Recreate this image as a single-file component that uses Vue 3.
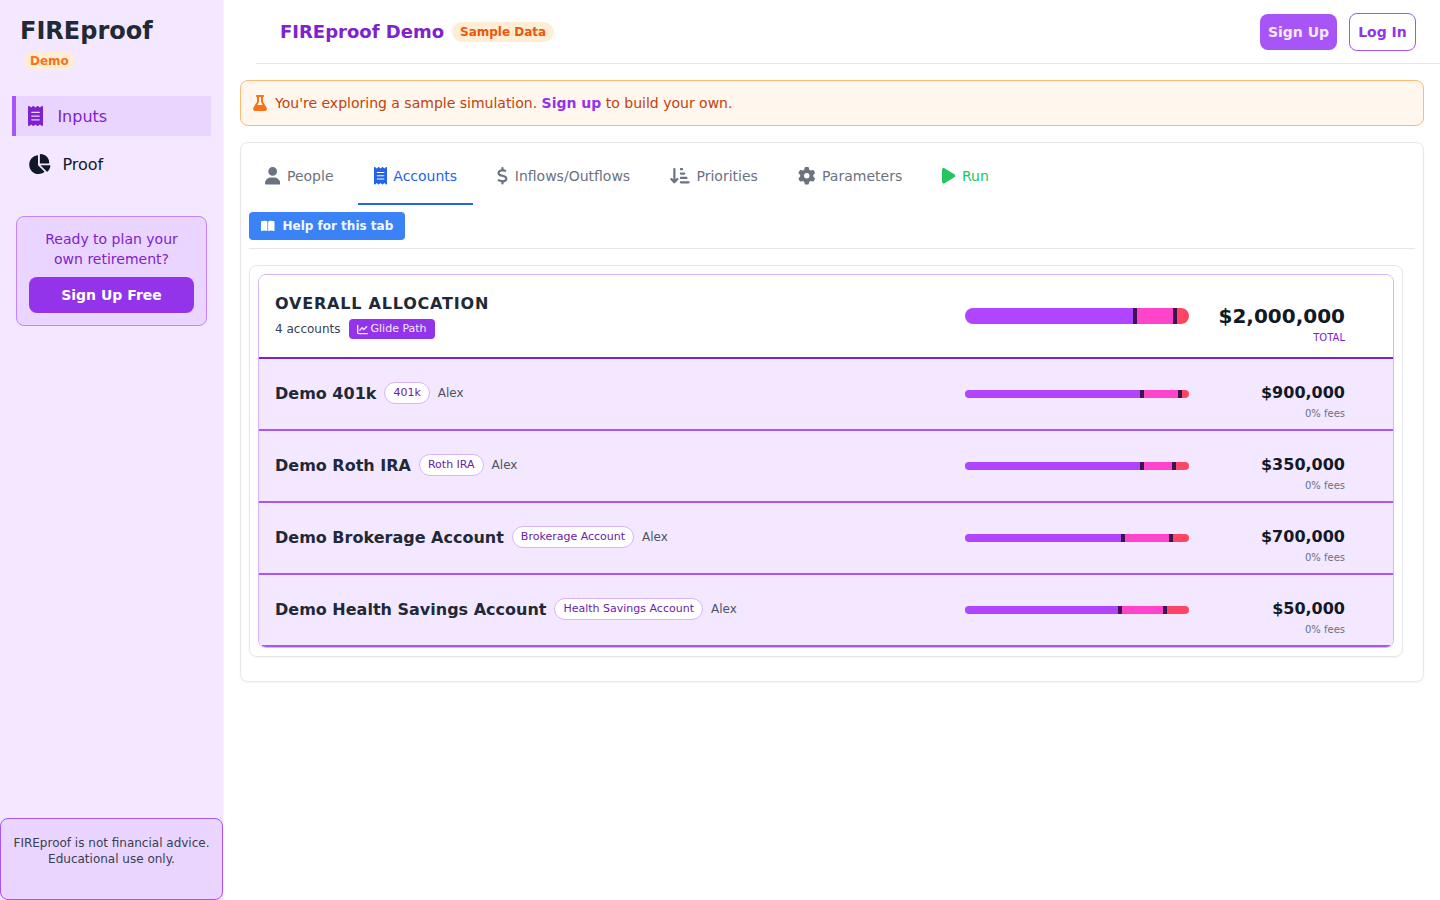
<template>
  <div class="layout">
    <aside class="sidebar">
      <div class="brand">FIREproof</div>
      <span class="demo-badge">Demo</span>

      <nav class="side-nav">
        <a class="side-link active">
          <svg class="side-icon" viewBox="0 0 384 512"><path :d="icons.receipt" /></svg>
          <span>Inputs</span>
        </a>
        <a class="side-link">
          <svg class="side-icon pie" viewBox="0 0 576 512"><path :d="icons.pie" /></svg>
          <span>Proof</span>
        </a>
      </nav>

      <div class="cta">
        <p>Ready to plan your own retirement?</p>
        <button class="cta-btn">Sign Up Free</button>
      </div>

      <div class="disclaimer">
        FIREproof is not financial advice.<br />Educational use only.
      </div>
    </aside>

    <main class="main">
      <header class="topbar">
        <div class="topbar-title">
          <span class="sim-name">FIREproof Demo</span>
          <span class="sample-badge">Sample Data</span>
        </div>
        <div class="topbar-actions">
          <button class="btn-signup">Sign Up</button>
          <button class="btn-login">Log In</button>
        </div>
      </header>

      <div class="banner">
        <svg class="banner-icon" viewBox="0 0 448 512"><path :d="icons.flask" /></svg>
        <span>You're exploring a sample simulation. <a class="banner-link">Sign up</a> to build your own.</span>
      </div>

      <section class="card">
        <div class="tabs">
          <a v-for="tab in tabs" :key="tab.label" class="tab" :class="tab.cls">
            <svg class="tab-icon" :viewBox="`0 0 ${tab.w} 512`"><path :d="tab.icon" /></svg>
            <span>{{ tab.label }}</span>
          </a>
        </div>

        <div class="help-row">
          <button class="help-btn">
            <svg class="help-icon" viewBox="0 0 576 512"><path :d="icons.book" /></svg>
            Help for this tab
          </button>
        </div>

        <div class="panel">
          <div class="alloc">
            <div class="alloc-head">
              <div>
                <div class="alloc-title">OVERALL ALLOCATION</div>
                <div class="alloc-sub">
                  <span>4 accounts</span>
                  <span class="glide">
                    <svg class="glide-icon" viewBox="0 0 512 512"><path :d="icons.line" /></svg>
                    Glide Path
                  </span>
                </div>
              </div>
              <div class="bar bar-big">
                <i class="seg s1" :style="{ width: '168px' }"></i>
                <i class="seg div"></i>
                <i class="seg s2" :style="{ width: '36px' }"></i>
                <i class="seg div"></i>
                <i class="seg s3"></i>
              </div>
              <div class="amount-col total-col">
                <div class="total-amount">$2,000,000</div>
                <div class="total-label">TOTAL</div>
              </div>
            </div>

            <div v-for="acc in accounts" :key="acc.name" class="acc-row">
              <div class="acc-info">
                <span class="acc-name">{{ acc.name }}</span>
                <span class="acc-type">{{ acc.type }}</span>
                <span class="acc-owner">Alex</span>
              </div>
              <div class="bar bar-small">
                <i class="seg s1" :style="{ width: acc.a + 'px' }"></i>
                <i class="seg div"></i>
                <i class="seg s2" :style="{ width: acc.b + 'px' }"></i>
                <i class="seg div"></i>
                <i class="seg s3"></i>
              </div>
              <div class="amount-col">
                <div class="acc-amount">{{ acc.amount }}</div>
                <div class="acc-fees">0% fees</div>
              </div>
            </div>
          </div>
        </div>
      </section>
    </main>
  </div>
</template>

<script setup>
const icons = {
  receipt: 'M14 2.2C22.5-1.7 32.5-.3 39.6 5.8L80 40.4 120.4 5.8c9-7.7 22.3-7.7 31.2 0L192 40.4 232.4 5.8c9-7.7 22.2-7.7 31.2 0L304 40.4 344.4 5.8c7.1-6.1 17.1-7.5 25.6-3.6s14 12.4 14 21.8V488c0 9.4-5.5 17.9-14 21.8s-18.5 2.5-25.6-3.6L304 471.6l-40.4 34.6c-9 7.7-22.3 7.7-31.2 0L192 471.6l-40.4 34.6c-9 7.7-22.2 7.7-31.2 0L80 471.6 39.6 506.2c-7.1 6.1-17.1 7.5-25.6 3.6S0 497.4 0 488V24C0 14.6 5.5 6.1 14 2.2zM96 144c-8.8 0-16 7.2-16 16s7.2 16 16 16H288c8.8 0 16-7.2 16-16s-7.2-16-16-16H96zM80 352c0 8.8 7.2 16 16 16H288c8.8 0 16-7.2 16-16s-7.2-16-16-16H96c-8.8 0-16 7.2-16 16zM96 240c-8.8 0-16 7.2-16 16s7.2 16 16 16H288c8.8 0 16-7.2 16-16s-7.2-16-16-16H96z',
  pie: 'M304 240V16.6c0-9 7-16.6 16-16.6C443.7 0 544 100.3 544 224c0 9-7.6 16-16.6 16H304zM32 272C32 150.7 122.1 50.3 239 34.3c9.2-1.3 17 6.1 17 15.4V288L412.5 444.5c6.7 6.7 6.2 17.7-1.5 23.1C371.8 495.6 323.8 512 272 512C139.5 512 32 404.6 32 272zm526.4 16c9.3 0 16.6 7.8 15.4 17c-7.7 55.9-34.6 105.6-73.9 142.3c-6 5.6-15.4 5.2-21.2-.7L320 288H558.4z',
  flask: 'M288 0H160 128C110.3 0 96 14.3 96 32s14.3 32 32 32V196.8c0 11.8-3.3 23.5-9.5 33.5L10.3 406.2C3.6 417.2 0 429.7 0 442.6C0 480.9 31.1 512 69.4 512H378.6c38.3 0 69.4-31.1 69.4-69.4c0-12.8-3.6-25.4-10.3-36.4L329.5 230.4c-6.2-10.1-9.5-21.7-9.5-33.5V64c17.7 0 32-14.3 32-32s-14.3-32-32-32H288zM192 196.8V64h64V196.8c0 23.7 6.6 46.9 19 67.1L309.5 320h-171L173 263.9c12.4-20.2 19-43.4 19-67.1z',
  book: 'M249.6 471.5c10.8 3.8 22.4-4.1 22.4-15.5V78.6c0-4.2-1.6-8.4-5-11C247.4 52 202.4 32 144 32C93.5 32 46.3 45.3 18.1 56.1C6.8 60.5 0 71.7 0 83.8V454.1c0 11.9 12.8 20.2 24.1 16.5C55.6 460.1 105.5 448 144 448c33.9 0 79 14 105.6 23.5zm76.8 0C353 462 398.1 448 432 448c38.5 0 88.4 12.1 119.9 22.6c11.3 3.8 24.1-4.6 24.1-16.5V83.8c0-12.1-6.8-23.3-18.1-27.6C529.7 45.3 482.5 32 432 32c-58.4 0-103.4 20-123 35.6c-3.3 2.6-5 6.8-5 11V456c0 11.4 11.7 19.3 22.4 15.5z',
  line: 'M64 64c0-17.7-14.3-32-32-32S0 46.3 0 64V400c0 44.2 35.8 80 80 80H480c17.7 0 32-14.3 32-32s-14.3-32-32-32H80c-8.8 0-16-7.2-16-16V64zm406.6 86.6c12.5-12.5 12.5-32.8 0-45.3s-32.8-12.5-45.3 0L320 210.7l-57.4-57.4c-12.5-12.5-32.8-12.5-45.3 0l-112 112c-12.5 12.5-12.5 32.8 0 45.3s32.8 12.5 45.3 0L240 221.3l57.4 57.4c12.5 12.5 32.8 12.5 45.3 0l128-128z',
  user: 'M224 256A128 128 0 1 0 224 0a128 128 0 1 0 0 256zm-45.7 48C79.8 304 0 383.8 0 482.3C0 498.7 13.3 512 29.7 512H418.3c16.4 0 29.7-13.3 29.7-29.7C448 383.8 368.2 304 269.7 304H178.3z',
  dollar: 'M160 0c17.7 0 32 14.3 32 32V67.7c1.6 .2 3.1 .4 4.7 .7c.4 .1 .7 .1 1.1 .2l48 8.8c17.4 3.2 28.9 19.9 25.7 37.2s-19.9 28.9-37.2 25.7l-47.5-8.7c-31.3-4.6-58.9-1.5-78.3 6.2s-27.2 18.3-29 28.1c-2 10.7-.5 16.7 1.2 20.4c1.8 3.9 5.5 8.3 12.8 13.2c16.3 10.7 41.3 17.7 73.7 26.3l2.9 .8c28.6 7.6 63.6 16.8 89.6 33.8c14.2 9.3 27.6 21.9 35.9 39.5c8.5 17.9 10.3 37.9 6.4 59.2c-6.9 38-33.1 63.4-65.6 76.7c-13.7 5.6-28.6 9.2-44.4 11V480c0 17.7-14.3 32-32 32s-32-14.3-32-32V445.1c-.4-.1-.9-.1-1.3-.2l-.2 0 0 0c-24.4-3.8-64.5-14.3-91.5-26.3c-16.1-7.2-23.4-26.1-16.2-42.2s26.1-23.4 42.2-16.2c20.9 9.3 55.3 18.5 75.2 21.6c31.9 4.7 58.2 2 76-5.3c16.9-6.9 24.6-16.9 26.8-28.9c1.9-10.6 .4-16.7-1.3-20.4c-1.9-4-5.6-8.4-13-13.3c-16.4-10.7-41.5-17.7-74-26.3l-2.8-.7 0 0C119.4 279.3 84.4 270 58.4 253c-14.2-9.3-27.5-22-35.8-39.6c-8.4-17.9-10.1-37.9-6.1-59.2C23.7 116 52.3 91.2 84.8 78.3c13.3-5.3 27.9-8.9 43.2-11V32c0-17.7 14.3-32 32-32z',
  sort: 'M151.6 469.6C145.5 476.2 137 480 128 480s-17.5-3.8-23.6-10.4l-88-96c-11.9-13-11.1-33.3 2-45.2s33.3-11.1 45.2 2L96 365.7V64c0-17.7 14.3-32 32-32s32 14.3 32 32V365.7l32.4-35.3c11.9-13 32.2-13.9 45.2-2s13.9 32.2 2 45.2l-88 96zM320 32h32c17.7 0 32 14.3 32 32s-14.3 32-32 32H320c-17.7 0-32-14.3-32-32s14.3-32 32-32zm0 128h96c17.7 0 32 14.3 32 32s-14.3 32-32 32H320c-17.7 0-32-14.3-32-32s14.3-32 32-32zm0 128H480c17.7 0 32 14.3 32 32s-14.3 32-32 32H320c-17.7 0-32-14.3-32-32s14.3-32 32-32zm0 128H544c17.7 0 32 14.3 32 32s-14.3 32-32 32H320c-17.7 0-32-14.3-32-32s14.3-32 32-32z',
  gear: 'M495.9 166.6c3.2 8.7 .5 18.4-6.4 24.6l-43.3 39.4c1.1 8.3 1.7 16.8 1.7 25.4s-.6 17.1-1.7 25.4l43.3 39.4c6.9 6.2 9.6 15.9 6.4 24.6c-4.4 11.9-9.7 23.3-15.8 34.3l-4.7 8.1c-6.6 11-14 21.4-22.1 31.2c-5.9 7.2-15.7 9.6-24.5 6.8l-55.7-17.7c-13.4 10.3-28.2 18.9-44 25.4l-12.5 57.1c-2 9.1-9 16.3-18.2 17.8c-13.8 2.3-28 3.5-42.5 3.5s-28.7-1.2-42.5-3.5c-9.2-1.5-16.2-8.7-18.2-17.8l-12.5-57.1c-15.8-6.5-30.6-15.1-44-25.4L83.1 425.9c-8.8 2.8-18.6 .3-24.5-6.8c-8.1-9.8-15.5-20.2-22.1-31.2l-4.7-8.1c-6.1-11-11.4-22.4-15.8-34.3c-3.2-8.7-.5-18.4 6.4-24.6l43.3-39.4C64.6 273.1 64 264.6 64 256s.6-17.1 1.7-25.4L22.4 191.2c-6.9-6.2-9.6-15.9-6.4-24.6c4.4-11.9 9.7-23.3 15.8-34.3l4.7-8.1c6.6-11 14-21.4 22.1-31.2c5.9-7.2 15.7-9.6 24.5-6.8l55.7 17.7c13.4-10.3 28.2-18.9 44-25.4l12.5-57.1c2-9.1 9-16.3 18.2-17.8C227.3 1.2 241.5 0 256 0s28.7 1.2 42.5 3.5c9.2 1.5 16.2 8.7 18.2 17.8l12.5 57.1c15.8 6.5 30.6 15.1 44 25.4l55.7-17.7c8.8-2.8 18.6-.3 24.5 6.8c8.1 9.8 15.5 20.2 22.1 31.2l4.7 8.1c6.1 11 11.4 22.4 15.8 34.3zM256 336a80 80 0 1 0 0-160 80 80 0 1 0 0 160z',
  play: 'M73 39c-14.8-9.1-33.4-9.4-48.5-.9S0 62.6 0 80V432c0 17.4 9.4 33.4 24.5 41.9s33.7 8.1 48.5-.9L361 297c14.3-8.7 23-24.2 23-41s-8.7-32.2-23-41L73 39z'
};

const tabs = [
  { label: 'People', icon: icons.user, w: 448 },
  { label: 'Accounts', icon: icons.receipt, w: 384, cls: 'tab-active' },
  { label: 'Inflows/Outflows', icon: icons.dollar, w: 320 },
  { label: 'Priorities', icon: icons.sort, w: 576 },
  { label: 'Parameters', icon: icons.gear, w: 512 },
  { label: 'Run', icon: icons.play, w: 384, cls: 'tab-run' }
];

// a, b = width in px of the first two bar segments
const accounts = [
  { name: 'Demo 401k', type: '401k', amount: '$900,000', a: 175, b: 34 },
  { name: 'Demo Roth IRA', type: 'Roth IRA', amount: '$350,000', a: 175, b: 28 },
  { name: 'Demo Brokerage Account', type: 'Brokerage Account', amount: '$700,000', a: 156, b: 44 },
  { name: 'Demo Health Savings Account', type: 'Health Savings Account', amount: '$50,000', a: 153, b: 41 }
];
</script>

<style>
body {
  margin: 0;
  background: #fff;
}
</style>

<style scoped>
.layout {
  display: flex;
  min-height: 900px;
  font-family: "DejaVu Sans", sans-serif;
  color: #1f2937;
}

/* sidebar */
.sidebar {
  width: 224px;
  box-sizing: border-box;
  background: #f3e8ff;
  border-right: 1px solid #f9f5ff;
  display: flex;
  flex-direction: column;
  align-items: flex-start;
  flex-shrink: 0;
}
.brand {
  font-size: 24px;
  line-height: 32px;
  font-weight: 700;
  color: #1f2937;
  margin: 15px 0 0 20px;
}
.demo-badge {
  margin: 5px 0 0 24px;
  height: 18px;
  padding: 0 6px;
  border-radius: 9px;
  background: #ffedd5;
  color: #f97316;
  font-size: 12px;
  line-height: 18px;
  font-weight: 700;
}
.side-nav {
  margin: 26px 0 0 12px;
  width: 199px;
  display: flex;
  flex-direction: column;
  gap: 8px;
}
.side-link {
  height: 40px;
  box-sizing: border-box;
  display: flex;
  align-items: center;
  gap: 14.4px;
  padding-left: 16px;
  font-size: 16px;
  color: #111827;
}
.side-link.active {
  background: #e9d5ff;
  border-left: 4px solid #a855f7;
  padding-left: 12px;
  color: #7e22ce;
}
.side-icon {
  height: 20px;
  fill: #111827;
  flex-shrink: 0;
}
.active .side-icon {
  fill: #7e22ce;
}
.side-icon.pie {
  margin-right: -2.5px;
}
.cta {
  margin: 32px 0 0 16px;
  width: 191px;
  height: 110px;
  box-sizing: border-box;
  background: #e9d5ff;
  border: 1px solid #c084fc;
  border-radius: 8px;
  padding: 12px;
  text-align: center;
}
.cta p {
  margin: 0 0 8px;
  font-size: 14px;
  line-height: 20px;
  color: #7e22ce;
}
.cta-btn {
  width: 165px;
  height: 36px;
  border: 0;
  border-radius: 8px;
  background: #9333ea;
  color: #fff;
  font: 700 14px "DejaVu Sans", sans-serif;
}
.disclaimer {
  margin-top: auto;
  width: 223px;
  height: 82px;
  box-sizing: border-box;
  background: #e9d5ff;
  border: 1px solid #a855f7;
  border-radius: 8px;
  padding: 16px 12px;
  text-align: center;
  font-size: 12px;
  line-height: 16px;
  color: #374151;
}

/* main area */
.main {
  flex: 1;
  min-width: 0;
  padding: 0 16px;
}
.topbar {
  height: 64px;
  box-sizing: border-box;
  margin: 0 -16px 16px 16px;
  padding: 0 24px;
  border-bottom: 1px solid #e5e7eb;
  display: flex;
  align-items: center;
  justify-content: space-between;
}
.topbar-title {
  display: flex;
  align-items: center;
  gap: 8px;
}
.sim-name {
  font-size: 18px;
  font-weight: 700;
  color: #7e22ce;
}
.sample-badge {
  height: 20px;
  padding: 0 8px;
  border-radius: 10px;
  background: #ffedd5;
  color: #ea580c;
  font-size: 12px;
  line-height: 20px;
  font-weight: 700;
}
.topbar-actions {
  display: flex;
  align-items: center;
  gap: 12px;
}
.btn-signup {
  width: 77px;
  height: 36px;
  padding: 0;
  border: 0;
  border-radius: 8px;
  background: #a855f7;
  color: #f3e8ff;
  font: 700 14px "DejaVu Sans", sans-serif;
}
.btn-login {
  width: 67px;
  height: 38px;
  padding: 0;
  border: 1px solid #a855f7;
  border-radius: 8px;
  background: #fff;
  color: #9333ea;
  font: 700 14px "DejaVu Sans", sans-serif;
}
.banner {
  height: 46px;
  box-sizing: border-box;
  display: flex;
  align-items: center;
  gap: 8px;
  padding: 0 12px;
  background: #fff7ed;
  border: 1px solid #fdba74;
  border-radius: 8px;
  font-size: 14px;
  color: #c2410c;
}
.banner-icon {
  height: 16px;
  fill: #f97316;
}
.banner-link {
  font-weight: 700;
  color: #9333ea;
}
.card {
  margin-top: 16px;
  height: 540px;
  box-sizing: border-box;
  border: 1px solid #e5e7eb;
  border-radius: 8px;
  padding: 0 8px 24px;
  box-shadow: 0 1px 2px rgba(0, 0, 0, 0.05);
}
.tabs {
  display: flex;
  gap: 8px;
  height: 62px;
  padding-top: 0;
  box-sizing: border-box;
}
.tab {
  height: 62px;
  box-sizing: border-box;
  display: flex;
  align-items: center;
  gap: 6.7px;
  padding: 6px 16px 0;
  font-size: 14px;
  color: #6b7280;
  fill: #6b7280;
  border-bottom: 2px solid transparent;
}
.tab-icon {
  height: 17.5px;
  flex-shrink: 0;
}
.tab-active {
  color: #2563eb;
  fill: #2563eb;
  border-bottom-color: #2563eb;
}
.tab-run {
  color: #22c55e;
  fill: #22c55e;
}
.help-row {
  margin-top: 7px;
  padding-bottom: 8px;
  border-bottom: 1px solid #e5e7eb;
  display: flex;
}
.help-btn {
  height: 28px;
  padding: 0 12px;
  border: 0;
  border-radius: 4px;
  background: #3b82f6;
  color: #f3f8ff;
  font: 700 12px "DejaVu Sans", sans-serif;
  display: flex;
  align-items: center;
  gap: 8px;
}
.help-icon {
  height: 12px;
  fill: #fff;
}
.panel {
  margin: 16px 12px 0 0;
  padding: 8px;
  border: 1px solid #e5e7eb;
  border-radius: 8px;
  box-shadow: 0 1px 2px rgba(0, 0, 0, 0.05);
}
.alloc {
  border: 1px solid #d8b4fe;
  border-radius: 8px;
  overflow: hidden;
}
.alloc-head,
.acc-row {
  display: grid;
  grid-template-columns: 1fr 224px 156px;
  align-items: start;
  box-sizing: border-box;
  padding: 0 48px 0 16px;
}
.alloc-head {
  height: 84px;
  padding-top: 17px;
  background: #fff;
  border-bottom: 2px solid #7e22ce;
}
.alloc-title {
  font-size: 16px;
  line-height: 24px;
  font-weight: 700;
  letter-spacing: 0.8px;
  color: #1f2937;
}
.alloc-sub {
  margin-top: 3px;
  display: flex;
  align-items: center;
  gap: 8px;
  font-size: 12px;
  color: #374151;
}
.glide {
  height: 20px;
  padding: 0 8px;
  border-radius: 4px;
  background: #9333ea;
  color: #f3e8ff;
  font-size: 11px;
  line-height: 20px;
  display: flex;
  align-items: center;
  gap: 3px;
}
.glide-icon {
  height: 11px;
  fill: #f3e8ff;
}
.bar {
  display: flex;
  overflow: hidden;
}
.bar-big {
  height: 16px;
  margin-top: 16px;
  border-radius: 8px;
}
.bar-small {
  height: 8px;
  margin-top: 9px;
  border-radius: 4px;
}
.seg {
  display: block;
  height: 100%;
  flex-shrink: 0;
}
.s1 { background: #b044ff; }
.s2 { background: #ff44cc; }
.s3 { background: #ff4466; flex: 1; }
.div { width: 4px; background: #3b1350; }
.amount-col {
  text-align: right;
}
.total-col {
  margin-top: 10px;
}
.total-amount {
  font-size: 20px;
  line-height: 28px;
  font-weight: 700;
  color: #111827;
}
.total-label {
  font-size: 10px;
  line-height: 15px;
  color: #7e22ce;
}
.acc-row {
  height: 72px;
  padding-top: 22px;
  background: #f3e8ff;
  border-bottom: 2px solid #a855f7;
}
.acc-info {
  display: flex;
  align-items: center;
  gap: 8px;
  height: 24px;
}
.acc-name {
  font-size: 16px;
  font-weight: 700;
  color: #1f2937;
}
.acc-type {
  height: 22px;
  box-sizing: border-box;
  padding: 0 8px;
  border: 1px solid #d8b4fe;
  border-radius: 11px;
  background: #fff;
  color: #6b21a8;
  font-size: 11px;
  line-height: 20px;
}
.acc-owner {
  font-size: 12px;
  color: #4b5563;
}
.acc-amount {
  font-size: 16px;
  line-height: 24px;
  font-weight: 700;
  color: #111827;
}
.acc-fees {
  font-size: 10px;
  line-height: 15px;
  margin-top: 1px;
  color: #6b7280;
}
</style>
